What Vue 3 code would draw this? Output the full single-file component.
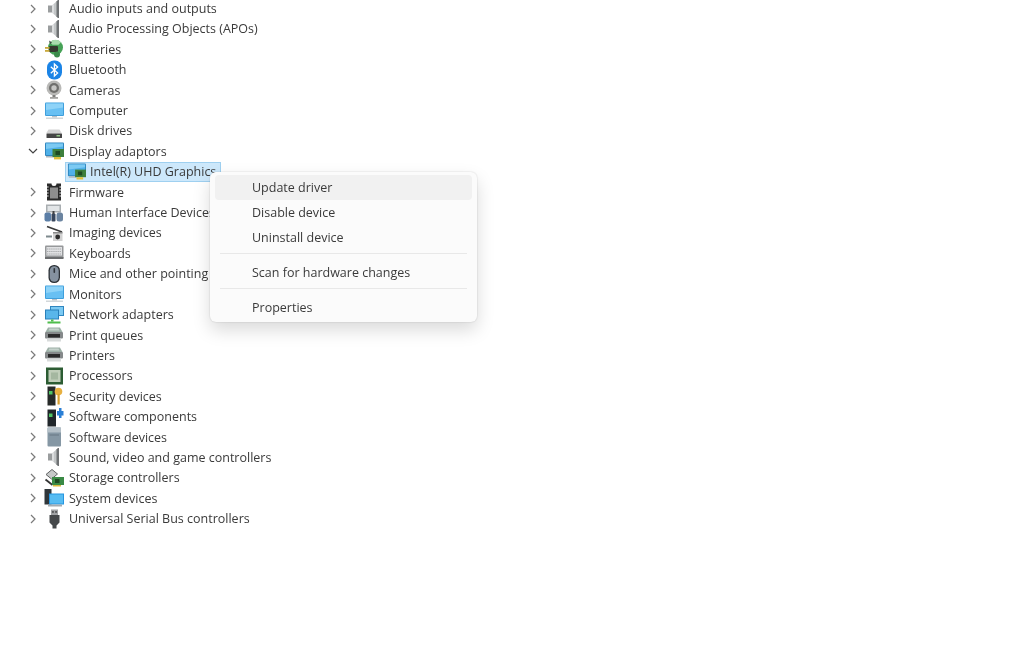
<script setup>
const speaker = `<path d="M4 6.500h4v7H4z" fill="#9a9d9e"/><path d="M8 6.500l6-5.500h1v18h-1l-6-5.500z" fill="#c3c6c7"/><path d="M12.500 2.400L14 1h1v18h-1l-1.500-1.400z" fill="#6f7274"/><path d="M8 6.500l2-1.800v10.600l-2-1.800z" fill="#dcdedf"/>`
const monitor = `<rect x="1" y="1.500" width="19" height="13.500" rx="1" fill="#3f9fdc"/><rect x="2" y="2.500" width="17" height="11.500" fill="#68c0f3"/><path d="M2 2.500h17v4L2 9z" fill="#8ed3f8"/><rect x="8" y="15" width="5" height="1.500" fill="#b8c0c6"/><rect x="2" y="16.500" width="17" height="1.500" fill="#d2d7da"/>`
const adapter = `<rect x="1" y="1.500" width="19" height="13.500" rx="1" fill="#2f86bf"/><rect x="2" y="2.500" width="17" height="11.500" fill="#4fb0e8"/><path d="M2 2.500h17v3L2 8z" fill="#7ccaf3"/><rect x="2" y="15" width="8" height="1.500" fill="#aeb6bc"/><rect x="8.500" y="8" width="11.500" height="8" fill="#3d7f3c"/><rect x="11.500" y="10" width="4.500" height="4" fill="#1e4a22"/><rect x="10" y="16" width="7" height="2.400" fill="#e0c03a"/>`
const printer = `<path d="M4 2.500h12l2.500 4.500H1.500z" fill="#9db0a7"/><path d="M5.500 3.500h9l1 2h-11z" fill="#c5d2cc"/><rect x="1" y="7" width="18" height="6.500" rx="1" fill="#85898a"/><rect x="4" y="9" width="12" height="3.500" fill="#2b2b2b"/><rect x="3" y="13.500" width="14" height="3" fill="#d8dbdb"/>`
const icons = {
  speaker,
  battery: `<circle cx="11.500" cy="8.500" r="7.500" fill="#46a257"/><path d="M6 3.200a7.500 7.500 0 0 1 11 0l-2.500 2.500h-6z" fill="#a8dcae"/><path d="M5 1.500l3 2-2 1.500z" fill="#3c4a40"/><rect x="5" y="7" width="9" height="6" rx="1" fill="#34392f"/><rect x="1" y="8" width="4.500" height="1.800" fill="#c9a93c"/><rect x="1" y="11" width="4.500" height="1.800" fill="#c9a93c"/><circle cx="13" cy="15.500" r="3" fill="#3a8a4a"/>`,
  bluetooth: `<rect x="3" y="0.500" width="15" height="19" rx="7" fill="#1b84e6"/><path d="M6.800 6.800l6.800 6.100-3.200 3V4.100l3.200 3-6.800 6.100" fill="none" stroke="#fff" stroke-width="1.300"/>`,
  camera: `<circle cx="10" cy="8" r="7.500" fill="#b9b9b7"/><circle cx="10" cy="8" r="5" fill="#6f6f6d"/><circle cx="10" cy="8" r="2.700" fill="#c6c6c4"/><rect x="8.500" y="15" width="3" height="2" fill="#7f7f7d"/><rect x="6" y="17" width="8" height="1.800" fill="#a3a3a1"/>`,
  monitor,
  disk: `<path d="M4.500 8.500h11l2.500 4H2z" fill="#d4d4d4"/><rect x="2.500" y="12.500" width="15.500" height="4.500" rx=".6" fill="#454545"/><rect x="12.500" y="14.200" width="3.500" height="1.200" fill="#a8e69a"/>`,
  adapter,
  firmware: `<path d="M3 1.500h4.500a2.500 2.500 0 0 0 5 0H17v17H3z" fill="#2a2a2a"/><rect x="6" y="5.500" width="8" height="11" fill="#8e8e8e"/><path d="M3 5h1.600M3 8h1.600M3 11h1.600M3 14h1.600M15.400 5H17M15.400 8H17M15.400 11H17M15.400 14H17" stroke="#fff" stroke-width=".9"/>`,
  hid: `<rect x="2" y="1.500" width="15" height="8" fill="#a9aeb1"/><rect x="3.500" y="3" width="12" height="5" fill="#e2e5e7"/><rect x="0.500" y="9.500" width="6.500" height="9" rx="2" fill="#5b7ea6"/><rect x="7.500" y="10.500" width="4" height="8" rx="1" fill="#37465c"/><rect x="12.500" y="9.500" width="6.500" height="9" rx="2.500" fill="#6b84a0"/><rect x="8.500" y="8" width="2" height="3" fill="#444"/>`,
  imaging: `<path d="M3 3.500l15 5.500" stroke="#3a3a3a" stroke-width="1.800"/><rect x="9" y="9" width="9.500" height="9" fill="#d2d2d2"/><rect x="9" y="9" width="9.500" height="1.500" fill="#8a8a8a"/><circle cx="13.700" cy="14" r="2.400" fill="#2c2c2c"/><rect x="2" y="12.500" width="6" height="2" fill="#7e8a8e"/>`,
  keyboard: `<rect x="1" y="2.500" width="18.500" height="13" rx="1" fill="#96989a"/><rect x="2.500" y="4" width="15.500" height="8.500" fill="#e0e1e3"/><path d="M3 6h14.500M3 8.500h14.500M3 11h14.500" stroke="#a3a5a7" stroke-width=".9" stroke-dasharray="1.400 .7"/><rect x="1" y="14" width="18.500" height="2" fill="#6b6d6f"/>`,
  mouse: `<rect x="4.500" y="1" width="11.500" height="18" rx="5.500" fill="#2c3136"/><rect x="5.800" y="2.300" width="8.900" height="15.400" rx="4.400" fill="#8592a0"/><rect x="9.500" y="4" width="1.600" height="5" rx=".8" fill="#2f343a"/>`,
  network: `<rect x="6" y="1" width="14" height="10" fill="#2f86bf"/><rect x="7" y="2" width="12" height="8" fill="#7ccaf3"/><rect x="1" y="4.500" width="14" height="10" fill="#2a80ba"/><rect x="2" y="5.500" width="12" height="8" fill="#59b6ea"/><rect x="7" y="14.500" width="2.500" height="2" fill="#4fbd4c"/><rect x="3.500" y="16.500" width="13" height="2" fill="#4fbd4c"/>`,
  printer,
  cpu: `<rect x="2" y="1.500" width="17" height="17" fill="#2c5c33"/><rect x="4.500" y="4" width="12" height="12" fill="#bfcdb9"/><rect x="7" y="6.500" width="7" height="7" fill="#a4b7a0"/>`,
  security: `<rect x="3.500" y="0.500" width="8" height="19" fill="#262a29"/><rect x="5" y="5" width="3.500" height="3.500" fill="#4fc464"/><circle cx="14.500" cy="5.500" r="3.800" fill="#e7b040"/><rect x="13.500" y="8" width="2.200" height="10.500" fill="#d9a030"/>`,
  component: `<rect x="3.500" y="2.500" width="8.500" height="17" fill="#20262a"/><rect x="5" y="6.500" width="3.500" height="3.500" fill="#4fc464"/><rect x="13" y="4" width="6.500" height="4.500" fill="#2a7fd5"/><rect x="15" y="1" width="2.500" height="10" fill="#2a7fd5"/>`,
  softdev: `<rect x="3.500" y="0.500" width="13.500" height="19" rx="1" fill="#8597a4"/><rect x="3.500" y="0.500" width="13.500" height="5" fill="#b4c0c8"/><rect x="5.500" y="7.500" width="9.500" height="1" fill="#697883"/>`,
  storage: `<path d="M2 6.500l6-5 5.500 4.500-6 5z" fill="#c6c8c8" stroke="#5f6162" stroke-width="1"/><path d="M1.500 11.500l7 5.500" stroke="#333" stroke-width="1.800"/><rect x="8" y="9" width="12" height="8" fill="#3a8a45"/><rect x="11" y="11" width="4.500" height="4" fill="#1e4a22"/><rect x="9" y="17" width="8" height="1.500" fill="#d9b93c"/>`,
  system: `<rect x="0.500" y="1" width="7" height="15.500" fill="#30373b"/><rect x="5" y="5.500" width="15" height="11" fill="#2796e0"/><rect x="6" y="6.500" width="13" height="9" fill="#57bcf2"/><rect x="4" y="16.500" width="14" height="2" fill="#a4acb2"/>`,
  usb: `<rect x="7" y="0.500" width="7" height="5.500" fill="#a0a2a4"/><rect x="8.200" y="2.200" width="1.500" height="1.500" fill="#333"/><rect x="11.300" y="2.200" width="1.500" height="1.500" fill="#333"/><path d="M5.500 6h10v7.500l-3 3v3h-4v-3l-3-3z" fill="#45484a"/>`
}
const rows = [
  ['Audio inputs and outputs', 'speaker'],
  ['Audio Processing Objects (APOs)', 'speaker'],
  ['Batteries', 'battery'],
  ['Bluetooth', 'bluetooth'],
  ['Cameras', 'camera'],
  ['Computer', 'monitor'],
  ['Disk drives', 'disk'],
  ['Display adaptors', 'adapter', 'open'],
  ['Intel(R) UHD Graphics', 'adapter', 'child'],
  ['Firmware', 'firmware'],
  ['Human Interface Devices', 'hid'],
  ['Imaging devices', 'imaging'],
  ['Keyboards', 'keyboard'],
  ['Mice and other pointing devices', 'mouse'],
  ['Monitors', 'monitor'],
  ['Network adapters', 'network'],
  ['Print queues', 'printer'],
  ['Printers', 'printer'],
  ['Processors', 'cpu'],
  ['Security devices', 'security'],
  ['Software components', 'component'],
  ['Software devices', 'softdev'],
  ['Sound, video and game controllers', 'speaker'],
  ['Storage controllers', 'storage'],
  ['System devices', 'system'],
  ['Universal Serial Bus controllers', 'usb']
].map(([label, icon, kind]) => ({ label, icon: icons[icon], kind }))
</script>

<template>
  <div class="page">
    <ul class="tree">
      <li v-for="r in rows" :key="r.label" class="row" :class="r.kind">
        <div v-if="r.kind === 'child'" class="selected">
          <svg class="icon" viewBox="0 0 20 20" v-html="r.icon"></svg>
          <span>{{ r.label }}</span>
        </div>
        <template v-else>
          <svg class="chev" viewBox="0 0 10 10">
            <path v-if="r.kind === 'open'" d="M1 3l4 4 4-4" />
            <path v-else d="M3 1l4 4-4 4" />
          </svg>
          <svg class="icon" viewBox="0 0 20 20" v-html="r.icon"></svg>
          <span>{{ r.label }}</span>
        </template>
      </li>
    </ul>
    <div class="menu">
      <div class="item hover">Update driver</div>
      <div class="item">Disable device</div>
      <div class="item">Uninstall device</div>
      <hr />
      <div class="item">Scan for hardware changes</div>
      <hr />
      <div class="item">Properties</div>
    </div>
  </div>
</template>

<style>
html, body { margin: 0; background: #fff; }
</style>

<style scoped>
.page {
  position: relative;
  width: 1024px;
  height: 648px;
  overflow: hidden;
  background: #fff;
  font-family: "Open Sans", "Noto Sans", sans-serif;
  font-size: 12.5px;
  color: #3a3a3a;
}
.tree {
  list-style: none;
  margin: -1.7px 0 0;
  padding: 0 0 0 28px;
  filter: blur(0.35px);
}
.row {
  display: flex;
  align-items: center;
  height: 20.42px;
  white-space: nowrap;
}
.chev {
  width: 10px;
  height: 10px;
  flex: none;
  margin-right: 6px;
}
.chev path {
  fill: none;
  stroke: #7a7a7a;
  stroke-width: 1.2;
}
.open .chev path { stroke: #444; }
.icon {
  width: 20px;
  height: 20px;
  flex: none;
  margin-right: 5px;
}
.selected {
  display: flex;
  align-items: center;
  box-sizing: border-box;
  height: 20.42px;
  margin-left: 37px;
  width: 156px;
  padding-left: 1px;
  overflow: hidden;
  background: #cde8fb;
  border: 1px solid #9fd0f0;
}
.selected .icon { width: 19px; height: 19px; margin-right: 4px; }
.menu {
  position: absolute;
  left: 210px;
  top: 172px;
  width: 267px;
  height: 150px;
  box-sizing: border-box;
  padding: 3px 5px;
  background: #fbfbfb;
  border-radius: 6px;
  box-shadow: 0 8px 18px rgba(0, 0, 0, 0.15), 0 0 2px rgba(0, 0, 0, 0.18);
  filter: blur(0.3px);
}
.item {
  height: 25px;
  line-height: 25px;
  padding-left: 37px;
  border-radius: 4px;
}
.item.hover { background: #f1f1f1; }
hr {
  border: 0;
  border-top: 1px solid #e8e8e8;
  margin: 2.5px 5px 6.5px;
}
</style>
